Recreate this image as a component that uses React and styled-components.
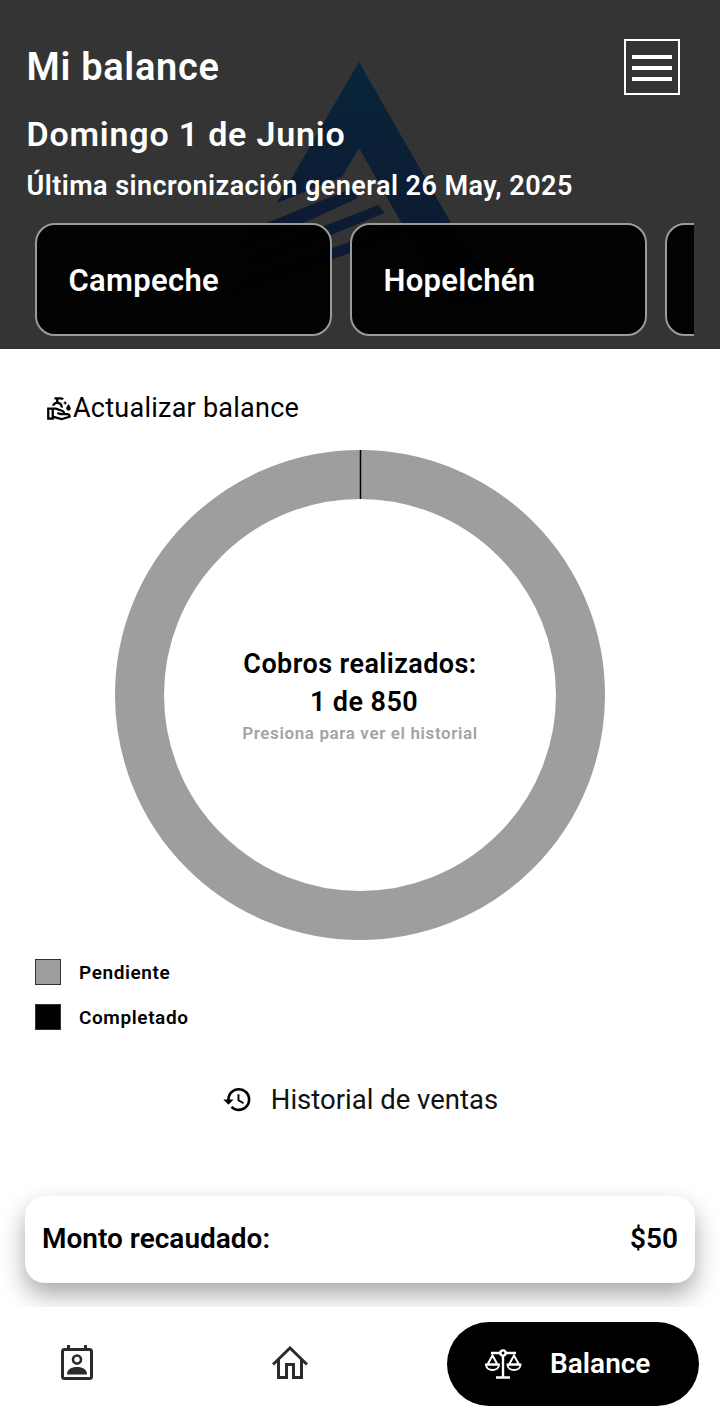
import React from 'react';
import styled, { createGlobalStyle } from 'styled-components';
import { MdHistory, MdOutlineCleanHands } from 'react-icons/md';

const GlobalStyle = createGlobalStyle`
  html, body {
    margin: 0;
    padding: 0;
    background: #fff;
    font-family: Roboto, "Liberation Sans", sans-serif;
  }
`;

const Screen = styled.div`
  width: 720px;
  height: 1414px;
  display: flex;
  flex-direction: column;
  overflow: hidden;
`;

const Header = styled.header`
  position: relative;
  flex: 0 0 349px;
  box-sizing: border-box;
  padding: 39px 0 0 26.5px;
  background: #343434;
  color: #fff;
  overflow: hidden;
`;

const Watermark = styled.svg`
  position: absolute;
  left: 220px;
  top: 60px;
  width: 280px;
  height: 240px;
`;

const TitleRow = styled.div`
  display: flex;
  justify-content: space-between;
  align-items: center;
  padding-right: 40.5px;
  height: 56px;
  position: relative;
`;

const Title = styled.h1`
  margin: 0;
  font-size: 38px;
  line-height: 56px;
  font-weight: 600;
  letter-spacing: 0.7px;
`;

const MenuButton = styled.button`
  width: 56px;
  height: 56px;
  box-sizing: border-box;
  padding: 2px 0 0;
  display: flex;
  flex-direction: column;
  align-items: center;
  justify-content: center;
  gap: 7px;
  background: transparent;
  border: 2px solid #fff;
`;

const MenuBar = styled.span`
  display: block;
  width: 40px;
  height: 4px;
  background: #fff;
`;

const DateLine = styled.div`
  position: relative;
  margin-top: 17px;
  font-size: 34px;
  line-height: 44px;
  font-weight: 600;
  letter-spacing: 0.8px;
`;

const SyncLine = styled.div`
  position: relative;
  margin-top: 12px;
  font-size: 27px;
  line-height: 36px;
  font-weight: 600;
  letter-spacing: 0.45px;
`;

const Tabs = styled.div`
  position: relative;
  display: flex;
  gap: 18px;
  width: 659px;
  margin: 19px 0 0 8.5px;
  overflow: hidden;
`;

const Tab = styled.div`
  flex: 0 0 297px;
  height: 113px;
  box-sizing: border-box;
  padding: 2px 0 0 31.5px;
  display: flex;
  align-items: center;
  background: rgba(0, 0, 0, 0.95);
  border: 2px solid #9a9a9a;
  border-radius: 20px;
  font-size: 31px;
  font-weight: 600;
  letter-spacing: 0.3px;
`;

const UpdateRow = styled.div`
  display: flex;
  align-items: center;
  height: 40px;
  margin: 39px 0 0 46px;
  font-size: 27px;
  font-weight: 450;
  letter-spacing: 0.25px;
  color: #000;
`;

const ChartWrap = styled.div`
  position: relative;
  width: 490px;
  height: 490px;
  margin: 22px auto 0;
`;

const ChartCenter = styled.div`
  position: absolute;
  inset: 0;
  display: flex;
  flex-direction: column;
  align-items: center;
  justify-content: center;
  text-align: center;
`;

const ChartLabel = styled.div`
  font-size: 27px;
  line-height: 38px;
  font-weight: 600;
  letter-spacing: 0.42px;
  color: #000;
`;

const ChartValue = styled(ChartLabel)`
  padding-left: 8px;
`;

const ChartHint = styled.div`
  font-size: 17px;
  line-height: 24px;
  font-weight: 600;
  letter-spacing: 0.62px;
  color: #a3a3a3;
`;

const Legend = styled.div`
  display: flex;
  flex-direction: column;
  gap: 19px;
  margin: 19px 0 0 35px;
`;

const LegendRow = styled.div`
  display: flex;
  align-items: center;
  gap: 18px;
  font-size: 19px;
  font-weight: 600;
  letter-spacing: 0.6px;
  color: #000;
`;

const Swatch = styled.span`
  display: block;
  width: 26px;
  height: 26px;
  box-sizing: border-box;
  border: 1px solid #333;
  background: ${(p) => p.$color};
`;

const HistoryRow = styled.div`
  display: flex;
  align-items: center;
  justify-content: center;
  gap: 18px;
  height: 40px;
  margin-top: 49px;
  font-size: 27.5px;
  font-weight: 450;
  color: #111;
`;

const TotalCard = styled.div`
  display: flex;
  justify-content: space-between;
  align-items: center;
  height: 87px;
  box-sizing: border-box;
  margin: 77px 25px 0;
  padding: 0 17px 2px;
  background: #fff;
  border-radius: 20px;
  box-shadow: 0 12px 24px rgba(0, 0, 0, 0.34);
  font-size: 28px;
  font-weight: 600;
  color: #000;
  position: relative;
`;

const BottomNav = styled.nav`
  position: relative;
  display: flex;
  align-items: center;
  height: 107px;
  margin-top: 24px;
  box-sizing: border-box;
  padding: 6px 21px 0 61px;
  background: #fff;
`;

const NavIcon = styled.div`
  display: flex;
  color: #2b2b2b;
  margin: 0 ${(p) => p.$gap}px 2px 0;
`;

const ActivePill = styled.div`
  display: flex;
  align-items: center;
  gap: 28px;
  width: 252px;
  height: 84px;
  box-sizing: border-box;
  padding-left: 38px;
  margin-left: auto;
  background: #000;
  border-radius: 42px;
  color: #fff;
  font-size: 28px;
  font-weight: 600;
`;

const ContactIcon = () => (
  <svg width="32" height="36" viewBox="0 0 32 36" fill="none">
    <path d="M7.500 0v6M24.500 0v6" stroke="currentColor" strokeWidth="3" />
    <rect x="1.500" y="4.500" width="29" height="29" rx="2" stroke="currentColor" strokeWidth="3" />
    <circle cx="16" cy="14.500" r="4" stroke="currentColor" strokeWidth="2.600" />
    <path d="M6 29.500c0-5 4-7.500 10-7.500s10 2.500 10 7.500Z" fill="currentColor" />
  </svg>
);

const HomeIcon = () => (
  <svg width="36" height="33" viewBox="0 0 36 33" fill="none" stroke="currentColor" strokeWidth="3">
    <path d="M1 18.500 18 2l17 16.500" />
    <path d="M6.500 14v17.500h8V18.500h7v13h8V14" />
  </svg>
);

const ScaleIcon = () => (
  <svg width="37" height="30" viewBox="0 0 37 30" fill="none" stroke="currentColor" strokeWidth="2.400">
    <circle cx="18" cy="4" r="2.600" />
    <path d="M18 7v21M11 28.500h14M6 4h9.500M20.500 4H31" />
    <path d="M7.500 6.500 2.500 15.500h10ZM29 6.500l-5 9h10Z" strokeWidth="2" />
    <path d="M1 15.500h13c0 3.200-2.800 5.500-6.500 5.500S1 18.700 1 15.500ZM22.500 15.500h13c0 3.200-2.800 5.500-6.500 5.500s-6.500-2.300-6.500-5.500Z" strokeWidth="2" />
  </svg>
);

const logoFade = (
  <linearGradient id="logoFade" gradientUnits="userSpaceOnUse" x1="0" y1="60" x2="0" y2="300">
    <stop offset="0" stopColor="#07263b" />
    <stop offset="0.6" stopColor="#0c1c33" />
    <stop offset="1" stopColor="#0c1a30" />
  </linearGradient>
);

export default function App() {
  return (
    <Screen>
      <GlobalStyle />
      <Header>
        <Watermark viewBox="220 60 280 240">
          <defs>{logoFade}</defs>
          <path d="M359 62 495 300h-50L359 148l-17 29-65 26Z" fill="url(#logoFade)" />
          <path d="M352 188l6 10-126 58 18-26Z" fill="url(#logoFade)" />
          <path d="M378 205l7 8-135 55-5-11Z" fill="url(#logoFade)" />
          <path d="M398 225l2 10-175 63 15-18Z" fill="url(#logoFade)" />
        </Watermark>
        <TitleRow>
          <Title>Mi balance</Title>
          <MenuButton aria-label="Menu">
            <MenuBar />
            <MenuBar />
            <MenuBar />
          </MenuButton>
        </TitleRow>
        <DateLine>Domingo 1 de Junio</DateLine>
        <SyncLine>Última sincronización general 26 May, 2025</SyncLine>
        <Tabs>
          <Tab>Campeche</Tab>
          <Tab>Hopelchén</Tab>
          <Tab />
        </Tabs>
      </Header>

      <UpdateRow>
        <MdOutlineCleanHands size={27} />
        Actualizar balance
      </UpdateRow>

      <ChartWrap>
        <svg width="490" height="490" viewBox="0 0 490 490">
          <circle cx="245" cy="245" r="220.5" fill="none" stroke="#9e9e9e" strokeWidth="49" />
          <path d="M245.500 0v49" stroke="#000" strokeWidth="1.500" />
        </svg>
        <ChartCenter>
          <ChartLabel>Cobros realizados:</ChartLabel>
          <ChartValue>1 de 850</ChartValue>
          <ChartHint>Presiona para ver el historial</ChartHint>
        </ChartCenter>
      </ChartWrap>

      <Legend>
        <LegendRow>
          <Swatch $color="#9e9e9e" />
          Pendiente
        </LegendRow>
        <LegendRow>
          <Swatch $color="#000" />
          Completado
        </LegendRow>
      </Legend>

      <HistoryRow>
        <MdHistory size={31} color="#000" />
        Historial de ventas
      </HistoryRow>

      <TotalCard>
        <span>Monto recaudado:</span>
        <span>$50</span>
      </TotalCard>

      <BottomNav>
        <NavIcon $gap={179}>
          <ContactIcon />
        </NavIcon>
        <NavIcon $gap={0}>
          <HomeIcon />
        </NavIcon>
        <ActivePill>
          <ScaleIcon />
          Balance
        </ActivePill>
      </BottomNav>
    </Screen>
  );
}
